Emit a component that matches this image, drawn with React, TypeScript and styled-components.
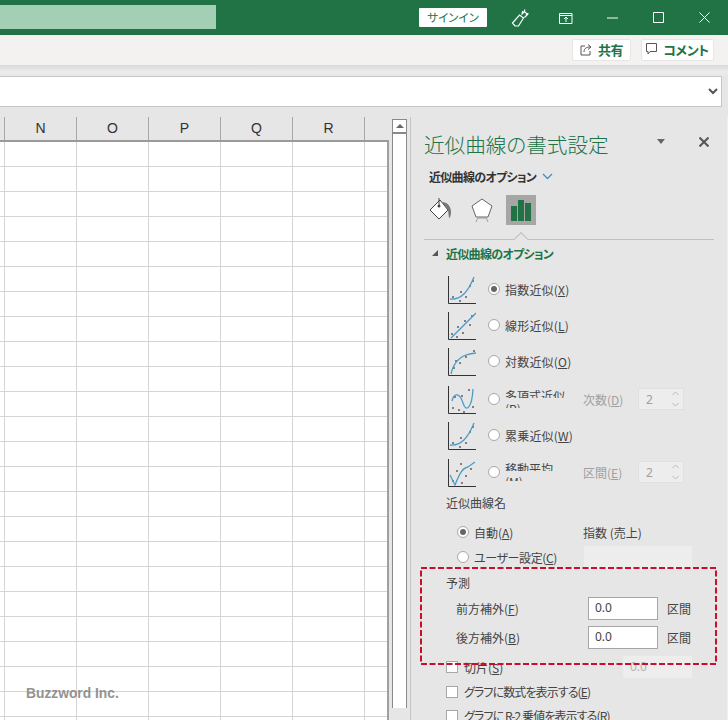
import React from 'react';
import styled, { createGlobalStyle } from 'styled-components';

const GlobalStyle = createGlobalStyle`
  html, body { margin: 0; padding: 0; background: #e6e6e6; }
  * { box-sizing: border-box; }
`;

const Page = styled.div`
  position: relative;
  width: 728px;
  height: 720px;
  overflow: hidden;
  display: flex;
  flex-direction: column;
  font-family: "Noto Sans CJK JP", "Noto Sans", sans-serif;
  font-feature-settings: "palt";
  font-size: 12px;
  color: #444;
  background: #e6e6e6;
`;

const TitleBar = styled.div`
  flex: 0 0 35px;
  display: flex;
  align-items: center;
  background: #217346;
`;

const SearchBox = styled.div`
  width: 216px;
  height: 24px;
  margin-bottom: 1px;
  background: #a3cfb4;
`;

const SignIn = styled.div`
  width: 68px;
  height: 19px;
  margin-left: 203px;
  background: #fff;
  color: #217346;
  font-size: 11.5px;
  line-height: 18px;
  text-align: center;
  border-radius: 1px;
`;

const TitleIcon = styled.svg<{ $left: number }>`
  flex: none;
  margin-left: ${p => p.$left}px;
  fill: none;
  stroke: #fff;
`;

const Ribbon = styled.div`
  flex: 0 0 30px;
  display: flex;
  align-items: center;
  justify-content: flex-end;
  gap: 10px;
  padding-right: 14px;
  background: #f3f2f1;
`;

const RibbonButton = styled.div<{ $width: number }>`
  width: ${p => p.$width}px;
  height: 22px;
  display: flex;
  align-items: center;
  justify-content: center;
  gap: 5px;
  padding-bottom: 2px;
  background: #fff;
  border: 1px solid #e8e6e4;
  border-radius: 2px;
  color: #217346;
  font-size: 13px;
  font-weight: 700;
  letter-spacing: -0.4px;
`;

const RibbonShadow = styled.div`
  flex: 0 0 11px;
  background: linear-gradient(#d8d8d8, #ececec 60%, #e8e8e8);
`;

const FormulaBar = styled.div`
  flex: 0 0 31px;
  width: 722px;
  display: flex;
  align-items: center;
  justify-content: flex-end;
  padding-right: 3px;
  background: #fff;
  border: 1px solid #c6c6c6;
  border-left: none;
`;

const Workspace = styled.div`
  flex: 1;
  min-height: 0;
  display: flex;
`;

const SheetArea = styled.div`
  flex: 0 0 389px;
  min-width: 0;
  padding-top: 10px;
  display: flex;
  flex-direction: column;
  background: #e6e6e6;
`;

const ColumnHeader = styled.div`
  flex: 0 0 25px;
  display: grid;
  grid-template-columns: 5px repeat(5, 72px) 24px;
  border-bottom: 2px solid #9a9a9a;
`;

const HeaderCell = styled.div`
  border-right: 1px solid #a8a8a8;
  text-align: center;
  line-height: 23px;
  font-family: "Liberation Sans", sans-serif;
  font-size: 14px;
  color: #333;
  &:last-child { border-right: none; }
`;

const CellGrid = styled.div`
  flex: 1;
  min-height: 0;
  display: grid;
  grid-template-columns: 5px repeat(5, 72px) 22px;
  grid-auto-rows: 25px;
  overflow: hidden;
  background: #fff;
  border-right: 2px solid #a0a0a0;
`;

const Cell = styled.div`
  border-right: 1px solid #d4d4d4;
  border-bottom: 1px solid #d4d4d4;
  &:nth-child(7n) { border-right: none; }
`;

const ScrollColumn = styled.div`
  flex: 0 0 21px;
  padding: 12px 3px 0 3px;
`;

const ScrollBar = styled.div`
  height: 589px;
  width: 15px;
  background: #fff;
  border: 1px solid #8a8a8a;
  border-bottom: none;
`;

const ScrollArrow = styled.div`
  height: 14px;
  display: flex;
  align-items: center;
  justify-content: center;
  border-bottom: 2px solid #8a8a8a;
  &::before {
    content: '';
    border-left: 4px solid transparent;
    border-right: 4px solid transparent;
    border-bottom: 4px solid #666;
  }
`;

const Pane = styled.div`
  flex: 0 0 318px;
  height: 613px;
  margin-top: 10px;
  padding-left: 13px;
  border-left: 1px solid #c4c4c4;
  border-right: 1px solid #f0f0f0;
  background: #e6e6e6;
  overflow: hidden;
`;

const PaneHead = styled.div`
  height: 34px;
  margin-top: 10px;
  display: flex;
  align-items: center;
`;

const PaneTitle = styled.div`
  width: 225px;
  font-size: 20.6px;
  font-weight: 300;
  line-height: 30px;
  white-space: nowrap;
  color: #217346;
`;

const PaneMenu = styled.div`
  width: 0;
  height: 0;
  margin: 0 0 5px 8px;
  border-left: 4px solid transparent;
  border-right: 4px solid transparent;
  border-top: 5px solid #666;
`;

const PaneClose = styled.svg`
  margin: 0 0 5px 34px;
  fill: none;
  stroke: #555;
  stroke-width: 2;
`;

const SubTitle = styled.div`
  height: 20px;
  margin: 5px 0 0 5px;
  display: flex;
  align-items: center;
  gap: 6px;
  font-weight: 700;
  font-size: 12px;
  letter-spacing: -0.7px;
  color: #333;
`;

const TabIcons = styled.div`
  height: 30px;
  margin: 9px 0 0 5px;
  display: flex;
  align-items: center;
`;

const TabIcon = styled.div<{ $active?: boolean; $left: number }>`
  width: 30px;
  height: 30px;
  margin-left: ${p => p.$left}px;
  display: flex;
  align-items: center;
  justify-content: center;
  background: ${p => (p.$active ? '#a6a6a6' : 'transparent')};
`;

const Divider = styled.div`
  position: relative;
  width: 290px;
  height: 1px;
  margin-top: 14px;
  background: #c0c0c0;
  &::before {
    content: '';
    position: absolute;
    left: 92px;
    top: -5px;
    width: 9px;
    height: 9px;
    background: #e6e6e6;
    border-left: 1px solid #c0c0c0;
    border-top: 1px solid #c0c0c0;
    transform: rotate(45deg);
  }
`;

const SectionHead = styled.div`
  height: 20px;
  margin-top: 3px;
  display: flex;
  align-items: center;
  font-weight: 700;
  font-size: 12px;
  letter-spacing: -0.7px;
  color: #217346;
  &::before {
    content: '';
    width: 0;
    height: 0;
    margin: 0 8px 0 8px;
    border-left: 6px solid transparent;
    border-bottom: 6px solid #555;
  }
`;

const TrendRows = styled.div`
  margin-top: 8px;
  margin-left: 24px;
`;

const TrendRow = styled.div<{ $gap?: number }>`
  height: 36px;
  margin-top: ${p => p.$gap ?? 0}px;
  display: flex;
  align-items: center;
`;

const TrendSvg = styled.svg`
  flex: none;
  margin: 2px 12px 0 0;
`;

const Radio = styled.span<{ $on?: boolean }>`
  flex: none;
  position: relative;
  width: 12px;
  height: 12px;
  border: 1px solid #a8a8a8;
  border-radius: 50%;
  background: #fff;
  &::after {
    content: '';
    display: ${p => (p.$on ? 'block' : 'none')};
    position: absolute;
    left: 2px;
    top: 2px;
    width: 6px;
    height: 6px;
    border-radius: 50%;
    background: #666;
  }
`;

const RadioLabel = styled.span`
  margin-left: 5px;
  white-space: nowrap;
  letter-spacing: 0.2px;
`;

// 幅が足りず2行に折り返されて上下が欠けているラベル
const ClippedLabel = styled.span`
  flex: none;
  width: 60px;
  margin-left: 5px;
  display: flex;
  flex-direction: column;
  white-space: nowrap;
`;

const ClippedLine = styled.span<{ $height: number; $top?: number }>`
  height: ${p => p.$height}px;
  margin-top: ${p => p.$top ?? 0}px;
  line-height: 12px;
  overflow: hidden;
`;

const Disabled = styled.span<{ $left: number; $width: number }>`
  flex: none;
  width: ${p => p.$width}px;
  margin-left: ${p => p.$left}px;
  color: #a0a0a0;
  white-space: nowrap;
`;

const SpinBox = styled.div`
  width: 46px;
  height: 22px;
  display: flex;
  align-items: center;
  justify-content: space-between;
  padding: 0 3px 0 7px;
  background: #ededed;
  border: 1px solid #e0e0e0;
  color: #a0a0a0;
  font-family: "Noto Sans", sans-serif;
`;

const SpinArrows = styled.svg`
  fill: none;
  stroke: #bbb;
`;

const Caption = styled.div<{ $top: number }>`
  height: 20px;
  margin: ${p => p.$top}px 0 0 22px;
  line-height: 20px;
`;

const OptionRow = styled.div<{ $top: number; $height: number; $left: number }>`
  height: ${p => p.$height}px;
  margin: ${p => p.$top}px 0 0 ${p => p.$left}px;
  display: flex;
  align-items: center;
  white-space: nowrap;
`;

const FixedLabel = styled.span<{ $width: number; $left?: number; $spacing?: number }>`
  width: ${p => p.$width}px;
  flex: none;
  margin-left: ${p => p.$left ?? 0}px;
  letter-spacing: ${p => p.$spacing ?? 0}px;
`;

const TightText = styled.span`
  letter-spacing: -0.9px;
  margin-bottom: 2px;
`;

const ValueBox = styled.div`
  width: 70px;
  height: 23px;
  padding-left: 6px;
  line-height: 20px;
  background: #fff;
  border: 1px solid #a6a6a6;
  font-family: "Noto Sans", sans-serif;
`;

const BlankBox = styled.div<{ $width: number }>`
  flex: none;
  width: ${p => p.$width}px;
  height: 22px;
  padding-left: 7px;
  line-height: 21px;
  background: #ededed;
  color: #b4b4b4;
  font-family: "Noto Sans", sans-serif;
`;

const Unit = styled.span`
  margin-left: 9px;
`;

const CheckBox = styled.span`
  flex: none;
  width: 12px;
  height: 12px;
  margin-right: 6px;
  background: #fff;
  border: 1px solid #a8a8a8;
`;

const Highlight = styled.svg`
  position: absolute;
  left: 420px;
  top: 567px;
  fill: none;
  stroke: #c8102e;
  stroke-width: 2;
  stroke-dasharray: 6 2.5;
  pointer-events: none;
`;

const Watermark = styled.div`
  position: absolute;
  left: 26px;
  top: 686px;
  font-family: "Liberation Sans", sans-serif;
  font-size: 13.8px;
  font-weight: 700;
  color: #888;
  opacity: 0.9;
`;

const columns = ['', 'N', 'O', 'P', 'Q', 'R', ''];

const TrendIcon = ({ curve, dots }: { curve: string; dots: number[][] }) => (
  <TrendSvg width="28" height="28" viewBox="0 0 28 28">
    <path d="M0.5 0V27.5H28" fill="none" stroke="#333" />
    {dots.map(([x, y], i) => (
      <rect key={i} x={x} y={y} width="2" height="2" fill="#808080" />
    ))}
    <path d={curve} fill="none" stroke="#4a9cc7" strokeWidth="1.3" />
  </TrendSvg>
);

const Spin = () => (
  <SpinArrows width="9" height="16" viewBox="0 0 9 16">
    <path d="M1.500 4l3-3 3 3M1.500 12l3 3 3-3" />
  </SpinArrows>
);

const expDots = [[4, 20], [11, 24], [12, 15], [17, 20], [21, 9], [24, 4]];
const linDots = [[3, 21], [8, 24], [9, 14], [14, 20], [16, 8], [21, 12], [23, 3]];
const logDots = [[5, 19], [7, 12], [11, 14], [17, 8], [25, 2]];
const polyDots = [[4, 21], [6, 10], [13, 9], [15, 25], [20, 3], [24, 20], [10, 23]];
const avgDots = [[4, 21], [8, 11], [12, 4], [17, 16], [22, 9], [13, 23]];

const expCurve = 'M2 23C13 24 20 16 26 1';

const App: React.FC = () => {
  const cells = Array.from({ length: 7 * 24 });
  return (
    <Page>
      <GlobalStyle />
      <TitleBar>
        <SearchBox />
        <SignIn>サインイン</SignIn>
        <TitleIcon $left={24} width="18" height="18" viewBox="0 0 18 18">
          <path d="M1.500 14l7-8 4 3-5 8H4zM8.500 6l4 3M13 3l1-2.500M15 6l2.500-1.500M11 4l1-2M13.500 8.500l3-3-3-3-3 3" strokeWidth="1.2" />
        </TitleIcon>
        <TitleIcon $left={30} width="14" height="12" viewBox="0 0 14 12">
          <path d="M.5 1.500h12.500v10H.5zM.5 3.500h12.500M7 10V5M5 7l2-2 2 2" />
        </TitleIcon>
        <TitleIcon $left={34} width="11" height="2" viewBox="0 0 11 2">
          <path d="M0 1h11" />
        </TitleIcon>
        <TitleIcon $left={35} width="11" height="11" viewBox="0 0 11 11">
          <path d="M.5.5h10v10H.5z" />
        </TitleIcon>
        <TitleIcon $left={35} width="11" height="11" viewBox="0 0 11 11">
          <path d="M.5.5l10 10M10.500.5l-10 10" />
        </TitleIcon>
      </TitleBar>
      <Ribbon>
        <RibbonButton $width={59}>
          <svg width="13" height="13" viewBox="0 0 13 13" fill="none" stroke="#555">
            <path d="M5 3H1v9h9V8M4 9c0-4 3-5 6-5M8 1.500L11 4 8 6.500" />
          </svg>
          共有
        </RibbonButton>
        <RibbonButton $width={73}>
          <svg width="12" height="12" viewBox="0 0 12 12" fill="none" stroke="#555">
            <path d="M.5.5h10v8H4L2 11V8.500H.5z" />
          </svg>
          コメント
        </RibbonButton>
      </Ribbon>
      <RibbonShadow />
      <FormulaBar>
        <svg width="10" height="7" viewBox="0 0 10 7" fill="none" stroke="#555" strokeWidth="2">
          <path d="M1 1l4 4 4-4" />
        </svg>
      </FormulaBar>
      <Workspace>
        <SheetArea>
          <ColumnHeader>
            {columns.map((c, i) => (
              <HeaderCell key={i}>{c}</HeaderCell>
            ))}
          </ColumnHeader>
          <CellGrid>
            {cells.map((_, i) => (
              <Cell key={i} />
            ))}
          </CellGrid>
        </SheetArea>
        <ScrollColumn>
          <ScrollBar>
            <ScrollArrow />
          </ScrollBar>
        </ScrollColumn>
        <Pane>
          <PaneHead>
            <PaneTitle>近似曲線の書式設定</PaneTitle>
            <PaneMenu />
            <PaneClose width="10" height="10" viewBox="0 0 10 10">
              <path d="M.5.5l9 9M9.500.5l-9 9" />
            </PaneClose>
          </PaneHead>
          <SubTitle>
            近似曲線のオプション
            <svg width="11" height="7" viewBox="0 0 11 7" fill="none" stroke="#3f8fc9" strokeWidth="1.3">
              <path d="M1 1l4.500 4.500L10 1" />
            </svg>
          </SubTitle>
          <TabIcons>
            <TabIcon $left={-4}>
              <svg width="26" height="26" viewBox="0 0 26 26">
                <path d="M13 3L3 13l9 9 9-9z" fill="#fff" stroke="#444" />
                <path d="M12 1v8" fill="none" stroke="#444" />
                <circle cx="12" cy="9" r="1.500" fill="#444" />
                <path d="M15 5c5 0 9 4 9 10 0 3-1 6-2 6l-1-8z" fill="#777" />
              </svg>
            </TabIcon>
            <TabIcon $left={12}>
              <svg width="24" height="26" viewBox="0 0 24 26" fill="none" stroke="#666">
                <path d="M12 2l10 7-4 11H6L2 9z" fill="#fff" />
                <path d="M6 25c1-2 1-3 2-4h8c1 1 1 2 2 4" stroke="#999" />
              </svg>
            </TabIcon>
            <TabIcon $active $left={9}>
              <svg width="20" height="21" viewBox="0 0 20 21" fill="#217346">
                <rect x="0" y="6" width="6" height="15" />
                <rect x="7" y="0" width="6" height="21" />
                <rect x="14" y="3" width="6" height="18" />
              </svg>
            </TabIcon>
          </TabIcons>
          <Divider />
          <SectionHead>近似曲線のオプション</SectionHead>
          <TrendRows>
            <TrendRow>
              <TrendIcon curve={expCurve} dots={expDots} />
              <Radio $on />
              <RadioLabel>指数近似(<u>X</u>)</RadioLabel>
            </TrendRow>
            <TrendRow>
              <TrendIcon curve="M3 26L28 1" dots={linDots} />
              <Radio />
              <RadioLabel>線形近似(<u>L</u>)</RadioLabel>
            </TrendRow>
            <TrendRow>
              <TrendIcon curve="M3 26C6 12 14 6 28 5" dots={logDots} />
              <Radio />
              <RadioLabel>対数近似(<u>O</u>)</RadioLabel>
            </TrendRow>
            <TrendRow $gap={2}>
              <TrendIcon curve="M4 15C6 6 12 7 15 17C18 27 24 22 25 3" dots={polyDots} />
              <Radio />
              <ClippedLabel>
                <ClippedLine $height={8}>多項式近似</ClippedLine>
                <ClippedLine $height={5} $top={5}>(<u>P</u>)</ClippedLine>
              </ClippedLabel>
              <Disabled $left={18} $width={55}>次数(<u>D</u>)</Disabled>
              <SpinBox>
                2
                <Spin />
              </SpinBox>
            </TrendRow>
            <TrendRow>
              <TrendIcon curve={expCurve} dots={expDots} />
              <Radio />
              <RadioLabel>累乗近似(<u>W</u>)</RadioLabel>
            </TrendRow>
            <TrendRow $gap={1}>
              <TrendIcon curve="M2 16L7 26C11 16 14 9 20 8L27 3" dots={avgDots} />
              <Radio />
              <ClippedLabel>
                <ClippedLine $height={8}>移動平均</ClippedLine>
                <ClippedLine $height={5} $top={5}>(<u>M</u>)</ClippedLine>
              </ClippedLabel>
              <Disabled $left={18} $width={55}>区間(<u>E</u>)</Disabled>
              <SpinBox>
                2
                <Spin />
              </SpinBox>
            </TrendRow>
          </TrendRows>
          <Caption $top={3}>近似曲線名</Caption>
          <OptionRow $top={7} $height={24} $left={33}>
            <Radio $on />
            <FixedLabel $width={109} $left={5}>自動(<u>A</u>)</FixedLabel>
            指数 (売上)
          </OptionRow>
          <OptionRow $top={1} $height={24} $left={33}>
            <Radio />
            <FixedLabel $width={110} $left={5} $spacing={-0.4}>ユーザー設定(<u>C</u>)</FixedLabel>
            <BlankBox $width={108} />
          </OptionRow>
          <Caption $top={4}>予測</Caption>
          <OptionRow $top={4} $height={23} $left={32}>
            <FixedLabel $width={132}>前方補外(<u>F</u>)</FixedLabel>
            <ValueBox>0.0</ValueBox>
            <Unit>区間</Unit>
          </OptionRow>
          <OptionRow $top={6} $height={23} $left={32}>
            <FixedLabel $width={132}>後方補外(<u>B</u>)</FixedLabel>
            <ValueBox>0.0</ValueBox>
            <Unit>区間</Unit>
          </OptionRow>
          <OptionRow $top={7} $height={22} $left={22}>
            <CheckBox />
            <FixedLabel $width={159}>切片(<u>S</u>)</FixedLabel>
            <BlankBox $width={69}>0.0</BlankBox>
          </OptionRow>
          <OptionRow $top={3} $height={22} $left={22}>
            <CheckBox />
            <TightText>グラフに数式を表示する(<u>E</u>)</TightText>
          </OptionRow>
          <OptionRow $top={2} $height={22} $left={22}>
            <CheckBox />
            <TightText>グラフに R-2 乗値を表示する(<u>R</u>)</TightText>
          </OptionRow>
        </Pane>
      </Workspace>
      <Highlight width="297" height="98" viewBox="0 0 297 98">
        <rect x="1" y="1" width="295" height="96" />
      </Highlight>
      <Watermark>Buzzword Inc.</Watermark>
    </Page>
  );
};

export default App;
